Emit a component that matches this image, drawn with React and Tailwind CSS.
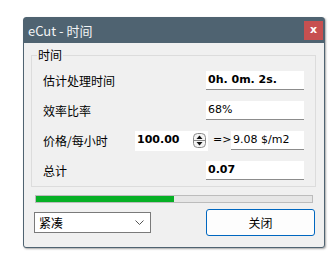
import React from 'react';

const cjk = { fontFamily: '"Noto Sans CJK SC", "Noto Sans", sans-serif' };
const tahoma = { fontFamily: '"DejaVu Sans", "Liberation Sans", sans-serif' };

const Field = ({ children, bold, className = '' }) => (
  <div
    className={`h-[19px] bg-white border-b border-[#8c8c8c] flex items-center pl-[2px] text-[11px] text-black ${bold ? 'font-bold' : ''} ${className}`}
    style={tahoma}
  >
    {children}
  </div>
);

const Spinner = () => (
  <svg width="13" height="15" viewBox="0 0 13 15">
    <rect x="0.5" y="0.5" width="12" height="14" rx="4" fill="#f4f4f4" stroke="#8a8a8a" />
    <line x1="1" y1="7.5" x2="12" y2="7.5" stroke="#8a8a8a" />
    <path d="M3.5 6 L6.5 2.5 L9.5 6 Z" fill="#111" />
    <path d="M3.5 9 L6.5 12.5 L9.5 9 Z" fill="#111" />
  </svg>
);

const App = () => {
  return (
    <div className="w-[331px] h-[258px] bg-white pt-[17px] pl-[23px] overflow-hidden">
      <div className="w-[302px] h-[231px] bg-[#f0f0f0] border border-[#4f6371] rounded-[3px] shadow-[1px_1px_2px_rgba(0,0,0,0.35)] flex flex-col">
        {/* title bar */}
        <div className="h-[25px] bg-[#4f6371] flex items-center justify-between pl-[4px] pr-[1px]">
          <span className="text-[13px] text-[#f2f4f5] leading-none" style={cjk}>eCut - 时间</span>
          <div className="w-[19px] h-[19px] bg-[#c75050] flex items-center justify-center">
            <span className="text-white text-[11px] font-bold leading-none mb-[2px]" style={tahoma}>x</span>
          </div>
        </div>

        <div className="px-[7px] pt-[12px]">
          {/* group box */}
          <div className="relative w-[285px] h-[132px] border border-[#dcdcdc] pt-[15px] pl-[11px] pr-[11px] flex flex-col gap-[11px]">
            <span className="absolute left-[5px] top-[-9px] bg-[#f0f0f0] px-[1px] text-[12px] leading-[16px] text-black" style={cjk}>时间</span>

            <div className="flex items-center justify-between h-[19px]">
              <span className="text-[12px] text-black" style={cjk}>估计处理时间</span>
              <Field bold className="w-[98px]">0h. 0m. 2s.</Field>
            </div>
            <div className="flex items-center justify-between h-[19px]">
              <span className="text-[12px] text-black" style={cjk}>效率比率</span>
              <Field className="w-[98px]">68%</Field>
            </div>
            <div className="flex items-center h-[19px]">
              <span className="text-[12px] text-black w-[92px]" style={cjk}>价格/每小时</span>
              <div className="w-[73px] h-[20px] bg-white flex items-center justify-between pl-[2px] pr-[2px]">
                <span className="text-[11px] font-bold text-black" style={tahoma}>100.00</span>
                <Spinner />
              </div>
              <span className="text-[11px] text-black ml-[5px] w-[18px]" style={tahoma}>=&gt;</span>
              <Field className="w-[73px]">9.08 $/m2</Field>
            </div>
            <div className="flex items-center justify-between h-[19px]">
              <span className="text-[12px] text-black" style={cjk}>总计</span>
              <Field bold className="w-[98px]">0.07</Field>
            </div>
          </div>

          {/* progress */}
          <div className="ml-[4px] mt-[8px] w-[278px] h-[8px] bg-[#e6e6e6] border border-[#bcbcbc]">
            <div className="h-full bg-[#06b025]" style={{ width: '50%' }} />
          </div>

          {/* bottom row */}
          <div className="flex items-center justify-between mt-[6px] pl-[3px] pr-[2px]">
            <div className="w-[117px] h-[21px] bg-white border border-[#7a7a7a] flex items-center justify-between pl-[4px] pr-[6px]">
              <span className="text-[12px] text-black leading-none" style={cjk}>紧凑</span>
              <svg width="9" height="6" viewBox="0 0 9 6">
                <path d="M0.5 0.5 L4.5 4.5 L8.5 0.5" fill="none" stroke="#555" strokeWidth="1" />
              </svg>
            </div>
            <button className="w-[109px] h-[27px] bg-[#fdfdfd] border border-[#0067c0] rounded-[3px] text-[12px] text-black" style={cjk}>
              关闭
            </button>
          </div>
        </div>
      </div>
    </div>
  );
};

export default App;
